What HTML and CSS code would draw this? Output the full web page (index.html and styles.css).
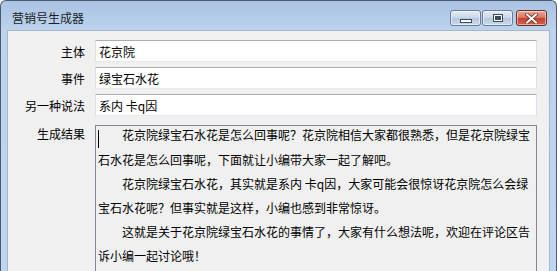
FILE: index.html
```html
<!DOCTYPE html>
<html lang="zh-CN">
<head>
  <meta charset="UTF-8" />
  <title>营销号生成器</title>
<link rel="stylesheet" href="styles.css">
</head>
<body>

  <div class="window">
    <!-- 标题栏 -->
    <div class="titlebar">
      <span class="title">营销号生成器</span>
      <div class="caption-btns">
        <button class="cap-btn min"><span class="min-glyph"></span></button>
        <button class="cap-btn max"><span class="max-glyph"></span></button>
        <button class="cap-btn close">
          <svg width="13" height="11" viewBox="0 0 13 11">
            <path d="M2 1.5 L11 9.5 M11 1.5 L2 9.5" stroke="#6a2a22" stroke-width="3.6" stroke-linecap="square" fill="none"/>
            <path d="M2 1.5 L11 9.5 M11 1.5 L2 9.5" stroke="#ffffff" stroke-width="2" stroke-linecap="square" fill="none"/>
          </svg>
        </button>
      </div>
    </div>

    <!-- 内容 -->
    <div class="client">
      <div class="form">
        <label class="label">主体</label>
        <div class="field">花京院</div>

        <label class="label">事件</label>
        <div class="field">绿宝石水花</div>

        <label class="label">另一种说法</label>
        <div class="field">系内 卡q因</div>

        <label class="label result-label">生成结果</label>
        <div class="result">
          <div class="result-text">
            <p><span class="caret"></span>花京院绿宝石水花是怎么回事呢？花京院相信大家都很熟悉，但是花京院绿宝石水花是怎么回事呢，下面就让小编带大家一起了解吧。</p>
            <p>花京院绿宝石水花，其实就是系内 卡q因，大家可能会很惊讶花京院怎么会绿宝石水花呢？但事实就是这样，小编也感到非常惊讶。</p>
            <p>这就是关于花京院绿宝石水花的事情了，大家有什么想法呢，欢迎在评论区告诉小编一起讨论哦！</p>
          </div>
        </div>
      </div>
    </div>
  </div>

</body>
</html>
```

FILE: styles.css
```css
* {
  box-sizing: border-box;
  margin: 0;
  padding: 0;
}

html, body {
  background: #ffffff;
  height: 100%;
  overflow: hidden;
}

body {
  font-family: "Noto Sans CJK SC", "Liberation Sans", sans-serif;
  font-size: 12px;
  color: #000;
}

.window {
  width: 557px;
  height: 100%;
  border: 1px solid #4d5a6b;
  border-bottom: none;
  border-radius: 6px 6px 0 0;
  background: linear-gradient(#a9c3e2, #bdd3ed 30px, #c0d6f0);
  display: flex;
  flex-direction: column;
}

.titlebar {
  height: 29px;
  flex-shrink: 0;
  display: flex;
  justify-content: space-between;
  align-items: flex-start;
  padding: 0 9px 0 11px;
}

.title {
  margin-top: 8px;
  line-height: 17px;
  color: #1b1f26;
  font-size: 12px;
}

.caption-btns {
  display: flex;
  margin-top: 9px;
}

.cap-btn {
  width: 31px;
  height: 16px;
  border: 1px solid #6d7c92;
  border-radius: 3px;
  background: linear-gradient(#e3ebf5, #c9d7e8 50%, #b5c7de 51%, #c9d9ec);
  display: flex;
  align-items: center;
  justify-content: center;
  box-shadow: inset 0 0 0 1px rgba(255, 255, 255, 0.5);
}

.cap-btn.max {
  margin-left: 1px;
}

.cap-btn.close {
  margin-left: 3px;
  border-color: #6e2c25;
  background: linear-gradient(#e9a89a, #d9705f 50%, #c4402f 51%, #d4624f);
}

.min-glyph {
  width: 12px;
  height: 4px;
  margin-top: 5px;
  background: #fff;
  border: 1px solid #3c4a5e;
}

.max-glyph {
  width: 10px;
  height: 8px;
  border: 1px solid #3c4a5e;
  background: #fff;
  box-shadow: inset 0 0 0 1px #fff, inset 0 0 0 3px #3c4a5e;
}

.client {
  flex: 1;
  min-height: 0;
  margin: 0 6px;
  background: #f0f0f0;
  border: 1px solid #a6b6cb;
  border-bottom: none;
  overflow: hidden;
}

.form {
  display: grid;
  grid-template-columns: 77px 1fr;
  column-gap: 10px;
  row-gap: 4px;
  padding: 9px 12px 0 0;
}

.label {
  text-align: right;
  line-height: 22px;
  color: #000;
  padding-top: 1px;
}

.field {
  height: 22px;
  line-height: 21px;
  padding: 0 3px;
  background: #fff;
  border: 1px solid #dbdfe6;
  border-top-color: #abadb3;
  border-bottom-color: #e3e9ef;
}

.result-label {
  margin-top: 4px;
  line-height: 18px;
  padding-top: 0;
}

.result {
  margin-top: 4px;
  height: 150px;
  padding: 0 2px;
  border: 1px solid #828790;
  border-bottom: none;
  background: #f0f0f0;
  line-height: 24px;
  overflow: hidden;
}

.result-text {
  margin-top: -3px;
}

.result p {
  text-indent: 2em;
}

.caret {
  display: inline-block;
  width: 1px;
  height: 18px;
  margin-left: -24px;
  margin-right: 23px;
  vertical-align: -8px;
  background: #000;
}
```
